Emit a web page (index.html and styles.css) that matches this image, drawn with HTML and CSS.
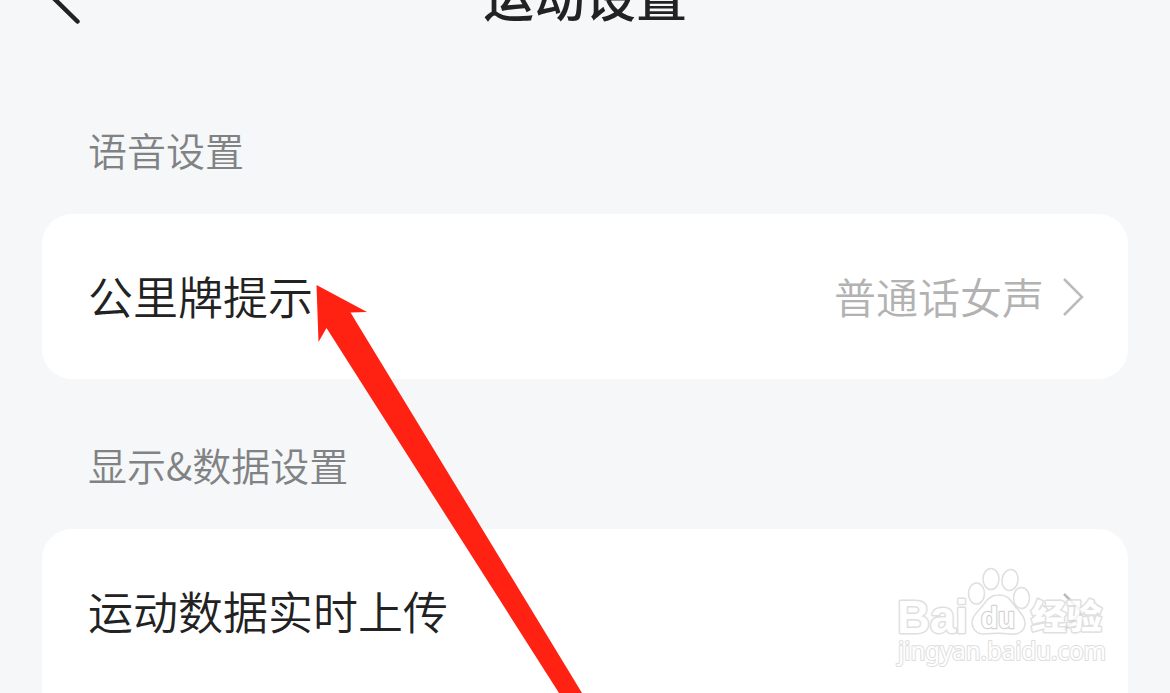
FILE: index.html
```html
<!DOCTYPE html>
<html lang="zh-CN">
<head>
<meta charset="utf-8">
<title>运动设置</title>
<link rel="stylesheet" href="styles.css">
</head>
<body>
<main class="screen">
  <header class="topbar">
    <svg class="back" width="40" height="60" viewBox="0 0 40 60"><path d="M30.500 4 5.500 29 30.500 53.500"/></svg>
    <h1 class="title">运动设置</h1>
  </header>
  <section class="group">
    <h2 class="label">语音设置</h2>
    <div class="card">
      <div class="row">
        <span class="name">公里牌提示</span>
        <span class="value">普通话女声</span>
        <svg class="chevron" width="22" height="40" viewBox="0 0 22 40"><path d="M2 2 20 20 2 38"/></svg>
      </div>
    </div>
  </section>
  <section class="group">
    <h2 class="label">显示&amp;数据设置</h2>
    <div class="card card-open">
      <div class="row">
        <span class="name">运动数据实时上传</span>
        <svg class="chevron" width="22" height="40" viewBox="0 0 22 40"><path d="M2 2 20 20 2 38"/></svg>
      </div>
    </div>
  </section>
  <svg class="watermark" width="250" height="138" viewBox="0 0 250 138">
    <g class="mark">
      <text class="latin" x="17" y="77.500" font-size="46.500" textLength="71" lengthAdjust="spacingAndGlyphs">Bai</text>
      <ellipse cx="96.500" cy="38.500" rx="8" ry="10.500"/>
      <ellipse cx="111" cy="24" rx="8" ry="10.500"/>
      <ellipse cx="130" cy="25" rx="8" ry="10.500" transform="rotate(8 130 25)"/>
      <ellipse cx="141.500" cy="43" rx="8" ry="10.500"/>
      <path d="M118 40C126 39 130 44 134 50C139 56 145 61 145 68C145 76 139 80 130 79C122 78 114 78 106 79C97 80 92 74 92 67C92 60 99 56 104 49C108 43 112 40 118 40Z"/>
      <text class="du" x="101" y="73" font-size="29" textLength="34" lengthAdjust="spacingAndGlyphs">du</text>
      <text class="han" x="151" y="74" font-size="34.500" textLength="71" lengthAdjust="spacingAndGlyphs">经验</text>
      <text class="site" x="18" y="105" font-size="25" textLength="208" lengthAdjust="spacingAndGlyphs">jingyan.baidu.com</text>
    </g>
  </svg>
  <svg class="arrow" width="270" height="409" viewBox="0 0 270 409"><path d="M.5 0 51 27 34.500 27.500 266 408H243L10.500 43 2.500 57Z"/></svg>
</main>
</body>
</html>
```
FILE: styles.css
```css
* { box-sizing: border-box; margin: 0; }
body {
  background: #f5f7f9;
  color: #222;
  font-family: "Noto Sans CJK SC", sans-serif;
}
.screen {
  position: relative;
  height: 693px;
  overflow: hidden;
  display: flex;
  flex-direction: column;
}
.topbar {
  display: grid;
  grid-template-columns: 1fr auto 1fr;
  align-items: center;
  flex: none;
  height: 150px;
  margin-top: -78px;
  padding: 0 47px;
}
.back { fill: none; stroke: #222; stroke-width: 4.500; stroke-linecap: round; margin-top: 1px; }
.title { margin-top: -4px; font-size: 51px; line-height: 60px; font-weight: 500; }
.group { flex: none; padding: 0 42px; }
.label {
  height: 142px;
  padding: 57px 46px 0;
  font-size: 39px;
  line-height: 40px;
  font-weight: 350;
  color: #808284;
}
.group + .group .label { height: 150px; padding-top: 65px; }
.card { background: #fff; border-radius: 30px; }
.card-open { border-radius: 30px 30px 0 0; }
.row {
  display: flex;
  align-items: center;
  height: 165px;
  padding: 0 44px 0 46px;
}
.name { flex: 1; padding-bottom: 2px; font-size: 45px; line-height: 60px; font-weight: 350; }
.value { padding-bottom: 2px; font-size: 42px; line-height: 60px; font-weight: 350; color: #b2b2b2; }
.chevron { margin-left: 18px; fill: none; stroke: #bbb; stroke-width: 2.500; }
.watermark { position: absolute; left: 880px; top: 555px; }
.mark { fill: #fff; stroke: #dadada; stroke-width: 1.500; opacity: .85; }
.mark text { paint-order: stroke; stroke-width: 3; stroke-linejoin: round; }
.latin { font-family: "Liberation Sans", sans-serif; font-weight: 700; }
.mark .du { font-family: "Liberation Sans", sans-serif; font-weight: 700; stroke: #ccc; stroke-width: 2.500; }
.han { font-family: "Noto Sans CJK SC", sans-serif; font-weight: 900; }
.mark .site { font-family: "Noto Sans", sans-serif; font-weight: 400; stroke-width: 2.200; }
.arrow { position: absolute; left: 316px; top: 285px; fill: #ff2112; }
```
